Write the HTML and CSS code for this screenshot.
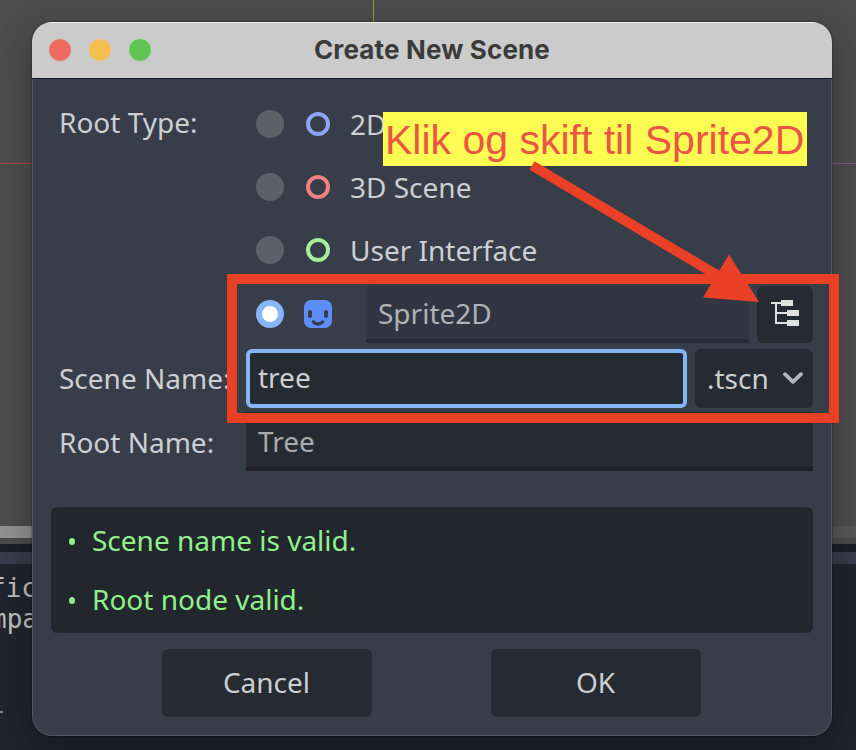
FILE: index.html
```html
<!DOCTYPE html>
<html lang="en">
<head>
<meta charset="utf-8">
<title>Create New Scene</title>
<link rel="stylesheet" href="styles.css">
</head>
<body>
<div class="editor">
  <div class="viewport"><i class="axis-y"></i><i class="axis-x"></i></div>
  <div class="scrollbar"><i class="thumb"></i></div>
  <div class="rail"></div>
  <div class="divider"></div>
  <div class="tabs"></div>
  <div class="console"><div class="log">fic</div><div class="log">mpa</div><i class="dash"></i></div>
</div>
<main class="dialog">
  <header class="titlebar">
    <div class="lights"><i class="close"></i><i class="minimize"></i><i class="zoom"></i></div>
    <h1>Create New Scene</h1>
  </header>
  <div class="body">
    <section class="form">
      <div class="row">
        <span class="label label-type">Root Type:</span>
        <div class="choice"><i class="radio"></i><i class="ring ring-2d"></i><span>2D</span></div>
      </div>
      <div class="row">
        <span class="label"></span>
        <div class="choice"><i class="radio"></i><i class="ring ring-3d"></i><span>3D Scene</span></div>
      </div>
      <div class="row">
        <span class="label"></span>
        <div class="choice"><i class="radio"></i><i class="ring ring-ui"></i><span>User Interface</span></div>
      </div>
      <div class="row row-custom">
        <span class="label"></span>
        <div class="choice">
          <i class="radio checked"></i>
          <svg class="sprite" width="28" height="28" viewBox="0 0 28 28">
            <rect width="28" height="28" rx="7" fill="#5b8cf8"/>
            <rect x="4" y="10" width="4" height="8" rx="2" fill="#363d4a"/>
            <rect x="20" y="10" width="4" height="8" rx="2" fill="#363d4a"/>
            <path d="M9.3 21.8Q14 26.2 18.7 21.8" fill="none" stroke="#363d4a" stroke-width="3.2" stroke-linecap="round"/>
          </svg>
          <div class="field type-field">Sprite2D</div>
          <div class="button pick">
            <svg width="28" height="28" viewBox="0 0 28 28" fill="#e0e0e0">
              <path d="M0 3h10V1h12v6H10V5H6v8h10v-2h12v6H16v-2H6v8h10v-2h12v6H16v-2H4V5H0z"/>
            </svg>
          </div>
        </div>
      </div>
      <div class="row row-name">
        <span class="label">Scene Name:</span>
        <div class="field name-field">tree</div>
        <div class="button ext"><span>.tscn</span>
          <svg width="20" height="13" viewBox="0 0 20 13"><path d="M2 2.2L10 9.8L18 2.2" fill="none" stroke="#b5b6b9" stroke-width="3.8" stroke-linecap="round" stroke-linejoin="round"/></svg>
        </div>
      </div>
      <div class="row row-root">
        <span class="label">Root Name:</span>
        <div class="field root-field">Tree</div>
      </div>
    </section>
    <section class="status">
      <div class="message"><i></i><span>Scene name is valid.</span></div>
      <div class="message"><i></i><span>Root node valid.</span></div>
    </section>
    <footer class="actions">
      <div class="button">Cancel</div>
      <div class="button">OK</div>
    </footer>
  </div>
</main>
<div class="frame"></div>
<div class="callout"><span>Klik og skift til Sprite2D</span></div>
<svg class="arrow" width="856" height="750" viewBox="0 0 856 750">
  <path d="M532 165.5L722 278" stroke="#ea4025" stroke-width="10"/>
  <path d="M759 302L729 254.500L703 297.500z" fill="#ea4025"/>
</svg>
</body>
</html>
```
FILE: styles.css
```css
* { box-sizing: border-box; }
body {
  margin: 0;
  width: 856px;
  height: 750px;
  overflow: hidden;
  position: relative;
  background: #1d2027;
  font-family: "Noto Sans", sans-serif;
  font-size: 28px;
  color: #cdcfd2;
}
i { font-style: normal; display: block; }

.editor { height: 750px; display: flex; flex-direction: column; }
.viewport { height: 526px; background: #4d4d4d; position: relative; }
.axis-y { position: absolute; left: 373px; top: 0; width: 1px; height: 30px; background: #80a845; }
.axis-x { position: absolute; left: 0; top: 163px; width: 100%; height: 1px; background: linear-gradient(90deg, #a8494f 50%, #91508a 50%); }
.scrollbar { height: 12px; background: #585858; }
.thumb { width: 400px; height: 12px; background: #929292; }
.rail { height: 6px; background: #4b4b4b; }
.divider { height: 8px; background: #1c1f25; }
.tabs { height: 12px; background: #373d4b; }
.console { flex: 1; background: #20242d; padding-top: 9px; }
.log { font: 26px/31px "DejaVu Sans Mono", monospace; color: #c0c1c3; margin-left: -10px; }
.log + .log { margin-left: -9px; }
.dash { width: 3px; height: 2px; margin-top: 76px; background: #8b8c8e; }

.dialog {
  position: absolute;
  left: 32px;
  top: 22px;
  width: 800px;
  height: 714px;
  border-radius: 20px;
  background: #383d4a;
  overflow: hidden;
  box-shadow: 0 12px 36px rgba(0, 0, 0, .32), 0 0 2px rgba(0, 0, 0, .7);
}
.dialog::after {
  content: "";
  position: absolute;
  inset: 57px 0 0;
  border: 1px solid #525763;
  border-top: 0;
  border-radius: 0 0 20px 20px;
}
.titlebar {
  height: 57px;
  display: grid;
  grid-template-columns: 200px 1fr 200px;
  align-items: center;
  background: #cbcbcb;
  border-bottom: 1px solid #141826;
  box-shadow: inset 0 1px 0 #ededed;
}
.lights { display: flex; gap: 16px; padding-left: 16px; }
.lights i { width: 24px; height: 24px; border-radius: 50%; border: 1px solid; }
.close { background: #ed6b5f; border-color: #d3554b; }
.minimize { background: #f5bf4f; border-color: #d8a243; }
.zoom { background: #61c554; border-color: #4fac43; }
h1 {
  margin: 0;
  font: 700 26px/32px Inter, sans-serif;
  letter-spacing: .15px;
  text-align: center;
  color: #3b3b3b;
}
.body { padding: 17px 19px 0; }
.form { display: flex; flex-direction: column; padding-left: 8px; }
.row { display: flex; height: 55px; margin-bottom: 8px; align-items: center; }
.label { width: 187px; flex: none; white-space: nowrap; }
.label-type { padding-bottom: 3px; }
.choice { flex: 1; display: flex; align-items: center; padding-left: 10px; }
.radio { width: 28px; height: 28px; border-radius: 50%; background: #5c6069; margin-right: 22px; }
.ring { width: 24px; height: 24px; border: 4px solid; border-radius: 50%; margin-right: 20px; }
.ring-2d { border-color: #8da5f3; }
.ring-3d { border-color: #ef8180; }
.ring-ui { border-color: #a3ef9b; }
.checked { background: #fff; border: 6px solid #84b6f8; margin-right: 20px; margin-bottom: 2px; }
.sprite { margin-right: 34px; margin-bottom: 2px; }
.field {
  height: 57px;
  padding: 0 12px;
  line-height: 54px;
  background: #262a33;
  border-bottom: 4px solid #1e2128;
}
.button { background: #262a33; border-radius: 6px; display: flex; align-items: center; justify-content: center; }
.row-custom { height: 57px; margin: 1px 0 6px; }
.type-field { width: 383px; background: #313642; border-color: #272b34; color: #b0b2b7; border-radius: 6px 6px 0 0; margin-right: 8px; }
.pick { width: 56px; height: 57px; padding-bottom: 4px; }
.row-name { height: 59px; margin-bottom: 4px; }
.row-name .label { padding-bottom: 2px; }
.name-field { width: 441px; height: 59px; border: 4px solid #84b6f8; border-radius: 6px; padding: 0 8px; line-height: 49px; margin-right: 8px; }
.ext { width: 118px; height: 59px; justify-content: flex-start; padding-left: 12px; gap: 14px; }
.ext span { padding-bottom: 2px; }
.row-root { height: 59px; margin-bottom: 36px; }
.root-field { flex: 1; height: 59px; line-height: 59px; color: #a8aaad; }
.status { height: 126px; background: #22262d; border-radius: 6px; padding: 5px 18px; color: #92f08c; }
.message { height: 59px; line-height: 56px; display: flex; }
.message i { width: 6px; height: 7px; border-radius: 50%; background: currentColor; margin: 26px 17px 0 0; }
.actions { display: flex; gap: 119px; justify-content: center; margin: 16px 2px 0 0; }
.actions .button { width: 210px; height: 68px; padding-bottom: 2px; }

.frame { position: absolute; left: 227px; top: 274px; width: 612px; height: 149px; border: 10px solid #ea4025; }
.callout {
  position: absolute;
  left: 383px;
  top: 112px;
  width: 424px;
  height: 54px;
  background: #fffc54;
  color: #ec5545;
  font: 41px/56px "Liberation Sans", sans-serif;
  white-space: nowrap;
  padding-left: 2px;
}
.arrow { position: absolute; left: 0; top: 0; }
```
